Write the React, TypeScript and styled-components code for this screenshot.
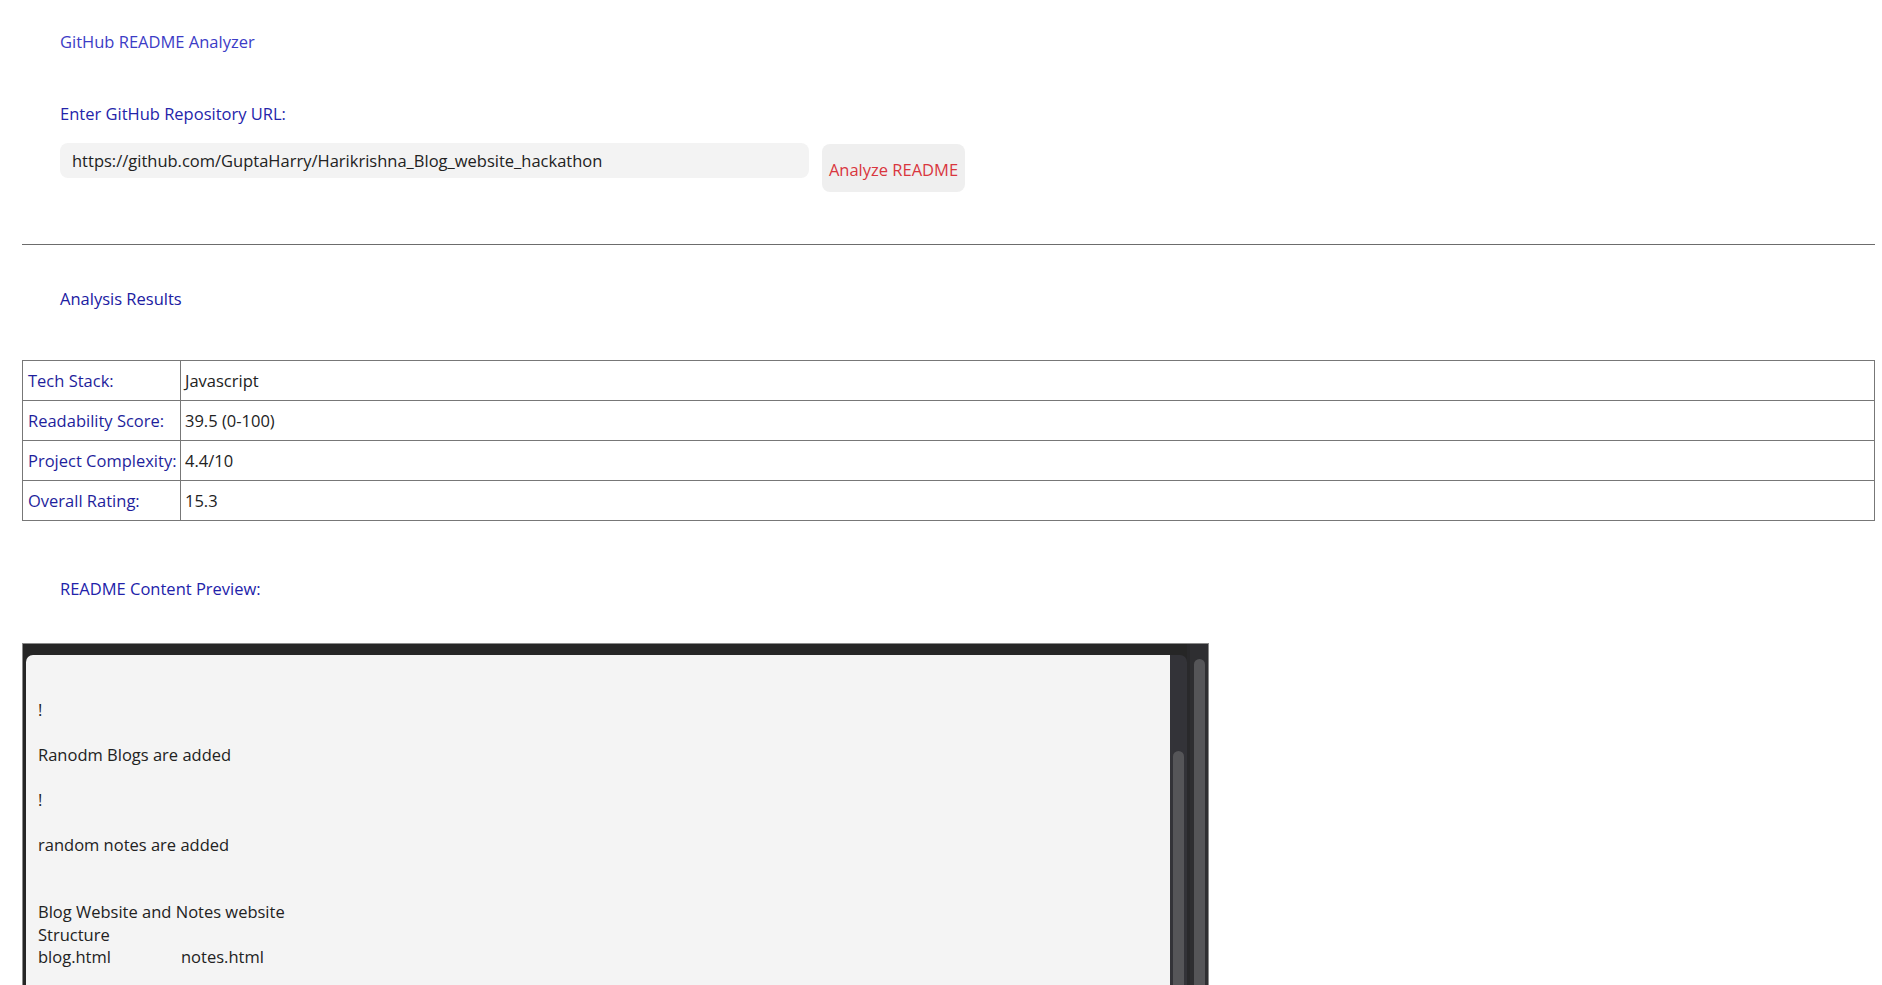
import React from "react";
import styled, { createGlobalStyle } from "styled-components";

const GlobalStyle = createGlobalStyle`
  html, body {
    margin: 0;
    padding: 0;
    background: #ffffff;
    overflow: hidden;
    font-family: "Open Sans", "Noto Sans", Arial, sans-serif;
    font-size: 16.5px;
  }
`;

const Page = styled.div`
  height: 985px;
  overflow: hidden;
  padding: 0 7px 0 22px;
  box-sizing: border-box;
`;

const Section = styled.div`
  padding-left: 38px;
`;

const Heading = styled.div<{ $color: string; $top: number }>`
  color: ${(p) => p.$color};
  font-size: 16.5px;
  line-height: 22px;
  margin-top: ${(p) => p.$top}px;
`;

const InputRow = styled.div`
  display: flex;
  align-items: flex-start;
  margin-top: 18px;
`;

const UrlInput = styled.input`
  width: 749px;
  height: 35px;
  box-sizing: border-box;
  border: none;
  border-radius: 8px;
  background: #f3f3f3;
  padding: 0 12px;
  font-family: inherit;
  font-size: 16.5px;
  color: #222;
  outline: none;
`;

const AnalyzeButton = styled.button`
  margin-left: 13px;
  margin-top: 1px;
  width: 143px;
  height: 48px;
  border: none;
  border-radius: 8px;
  background: #efefef;
  color: #d9363e;
  font-family: inherit;
  font-size: 16.5px;
  padding: 2px 0 0;
  cursor: pointer;
`;

const Rule = styled.hr`
  margin: 52px 0 0;
  border: none;
  border-top: 1px solid #6c6c6c;
  height: 0;
`;

const ResultsTable = styled.table`
  margin-top: 50px;
  width: 100%;
  border-collapse: collapse;
  border: 1px solid #777;
`;

const Row = styled.tr`
  height: 40px;
`;

const LabelCell = styled.td`
  width: 152px;
  border: 1px solid #777;
  padding: 0 0 0 5px;
  color: #1f1f9c;
  white-space: nowrap;
`;

const ValueCell = styled.td`
  border: 1px solid #777;
  padding: 0 0 0 4px;
  color: #222;
`;

const PreviewFrame = styled.div`
  margin-top: 43px;
  width: 1187px;
  height: 380px;
  box-sizing: border-box;
  display: flex;
  align-items: stretch;
  background: #262626;
  border: 1px solid #8a8a8a;
  border-bottom: none;
`;

const InnerScroll = styled.div`
  flex: 1;
  display: flex;
  margin: 11px 0 0 3px;
  border-radius: 7px 7px 0 0;
  overflow: hidden;
`;

const PreviewText = styled.div`
  flex: 1;
  background: #f4f4f4;
  color: #222;
  padding: 21px 12px 20px;
  font-size: 16.5px;
  line-height: 22.5px;
  white-space: pre-wrap;
`;

const FileName = styled.span`
  display: inline-block;
  width: 143px;
`;

const Track = styled.div<{ $width: number; $bg: string; $thumbTop: number }>`
  width: ${(p) => p.$width}px;
  background: ${(p) => p.$bg};
  padding-top: ${(p) => p.$thumbTop}px;
  display: flex;
  justify-content: center;
  box-sizing: border-box;
`;

const Thumb = styled.div<{ $width: number }>`
  width: ${(p) => p.$width}px;
  height: 100%;
  background: #555558;
  border-radius: 6px 6px 0 0;
`;

const Gap = styled.div`
  width: 3px;
  background: #29292b;
`;

const rows = [
  ["Tech Stack:", "Javascript"],
  ["Readability Score:", "39.5 (0-100)"],
  ["Project Complexity:", "4.4/10"],
  ["Overall Rating:", "15.3"],
];

export default function App() {
  return (
    <>
      <GlobalStyle />
      <Page>
        <Section>
          <Heading $color="#3c3cc6" $top={31}>GitHub README Analyzer</Heading>
          <Heading $color="#2424aa" $top={50}>Enter GitHub Repository URL:</Heading>
          <InputRow>
            <UrlInput
              type="text"
              defaultValue="https://github.com/GuptaHarry/Harikrishna_Blog_website_hackathon"
            />
            <AnalyzeButton>Analyze README</AnalyzeButton>
          </InputRow>
        </Section>
        <Rule />
        <Section>
          <Heading $color="#2020a2" $top={43}>Analysis Results</Heading>
        </Section>
        <ResultsTable>
          <tbody>
            {rows.map(([label, value]) => (
              <Row key={label}>
                <LabelCell>{label}</LabelCell>
                <ValueCell>{value}</ValueCell>
              </Row>
            ))}
          </tbody>
        </ResultsTable>
        <Section>
          <Heading $color="#2222aa" $top={57}>README Content Preview:</Heading>
        </Section>
        <PreviewFrame>
          <InnerScroll>
            <PreviewText>
              {"\n!\n\nRanodm Blogs are added\n\n!\n\nrandom notes are added\n\n\nBlog Website and Notes website\nStructure\n"}
              <FileName>blog.html</FileName>
              {"notes.html\n"}
            </PreviewText>
            <Track $width={17} $bg="#333338" $thumbTop={96}>
              <Thumb $width={11} />
            </Track>
          </InnerScroll>
          <Gap />
          <Track $width={18} $bg="#2e2e31" $thumbTop={15}>
            <Thumb $width={11} />
          </Track>
        </PreviewFrame>
      </Page>
    </>
  );
}
